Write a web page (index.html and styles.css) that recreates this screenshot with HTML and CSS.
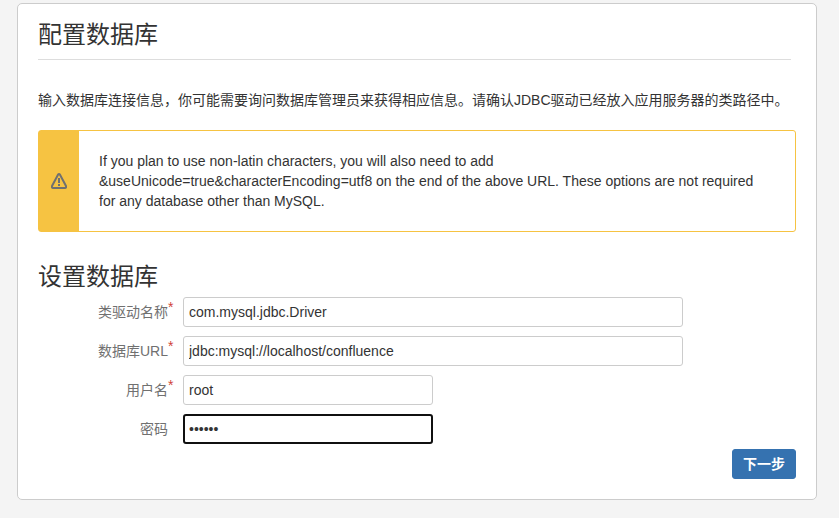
FILE: index.html
```html
<!DOCTYPE html>
<html lang="zh-CN">
<head>
<meta charset="utf-8">
<title>配置数据库</title>
<link rel="stylesheet" href="styles.css">
</head>
<body>
<main class="panel">
  <h1 class="title">配置数据库</h1>
  <p class="intro">输入数据库连接信息，你可能需要询问数据库管理员来获得相应信息。请确认JDBC驱动已经放入应用服务器的类路径中。</p>
  <div class="warning">
    <div class="warning-side">
      <svg class="warning-icon" viewBox="0 0 16 16" aria-hidden="true">
        <path d="M7 1.700Q8 .3 9 1.700L15 13Q15.400 15 14 15H2Q.6 15 1 13Z" fill="none" stroke="currentColor" stroke-width="2" stroke-linejoin="round"/>
        <path d="M7 5h2v5H7ZM7 11h2v2H7Z" fill="currentColor"/>
      </svg>
    </div>
    <p class="warning-text">If you plan to use non-latin characters, you will also need to add &amp;useUnicode=true&amp;characterEncoding=utf8 on the end of the above URL. These options are not required for any database other than MySQL.</p>
  </div>
  <h2 class="subtitle">设置数据库</h2>
  <form class="form">
    <div class="row">
      <label class="label required" for="driver">类驱动名称</label>
      <input class="field wide" id="driver" type="text" value="com.mysql.jdbc.Driver">
    </div>
    <div class="row">
      <label class="label required" for="url">数据库URL</label>
      <input class="field wide" id="url" type="text" value="jdbc:mysql://localhost/confluence">
    </div>
    <div class="row">
      <label class="label required" for="user">用户名</label>
      <input class="field" id="user" type="text" value="root">
    </div>
    <div class="row">
      <label class="label" for="password">密码</label>
      <input class="field active" id="password" type="password" value="secret">
    </div>
    <div class="actions">
      <button class="next" type="button">下一步</button>
    </div>
  </form>
</main>
</body>
</html>
```

FILE: styles.css
```css
* {
  box-sizing: border-box;
}

body {
  margin: 0;
  padding: 3px 22px 18px 17px;
  background: #f4f4f4;
  color: #333;
  font: 14px/20px "Liberation Sans", Arial, "Noto Sans CJK SC", sans-serif;
}

.panel {
  padding: 16px 20px 20px;
  background: #fff;
  border: 1px solid #ccc;
  border-radius: 5px;
}

.title,
.subtitle {
  margin: 0;
  font-size: 24px;
  font-weight: 400;
  line-height: 30px;
}

.title {
  margin-right: 5px;
  padding-bottom: 9px;
  border-bottom: 1px solid #ddd;
}

.intro {
  margin: 30px 0 20px;
  white-space: nowrap;
}

.warning {
  display: flex;
  border: 1px solid #f6c342;
  border-radius: 3px;
}

.warning-side {
  display: flex;
  flex: 0 0 40px;
  align-items: center;
  justify-content: center;
  background: #f6c342;
  color: #707070;
}

.warning-icon {
  width: 16px;
  height: 16px;
}

.warning-text {
  margin: 0;
  padding: 20px 35px 20px 20px;
}

.subtitle {
  margin-top: 30px;
}

.form {
  margin-top: 5px;
}

.row {
  display: flex;
  align-items: center;
  gap: 15px;
  margin-bottom: 9px;
}

.label {
  position: relative;
  flex: 0 0 130px;
  color: #707070;
  text-align: right;
}

.required::after {
  content: "*";
  position: absolute;
  top: -5px;
  left: 100%;
  color: #d04437;
}

.field {
  width: 250px;
  height: 30px;
  padding: 4px 5px;
  border: 1px solid #ccc;
  border-radius: 3px;
  background: #fff;
  color: #333;
  font: inherit;
}

.wide {
  width: 500px;
}

.active {
  border: 2px solid #101010;
  padding: 3px 4px;
}

.actions {
  display: flex;
  justify-content: flex-end;
  margin-top: -4px;
}

.next {
  height: 30px;
  padding: 4px 10px;
  border: 1px solid #3572b0;
  border-radius: 3px;
  background: #3572b0;
  color: #fff;
  font: inherit;
  font-weight: 700;
}
```
